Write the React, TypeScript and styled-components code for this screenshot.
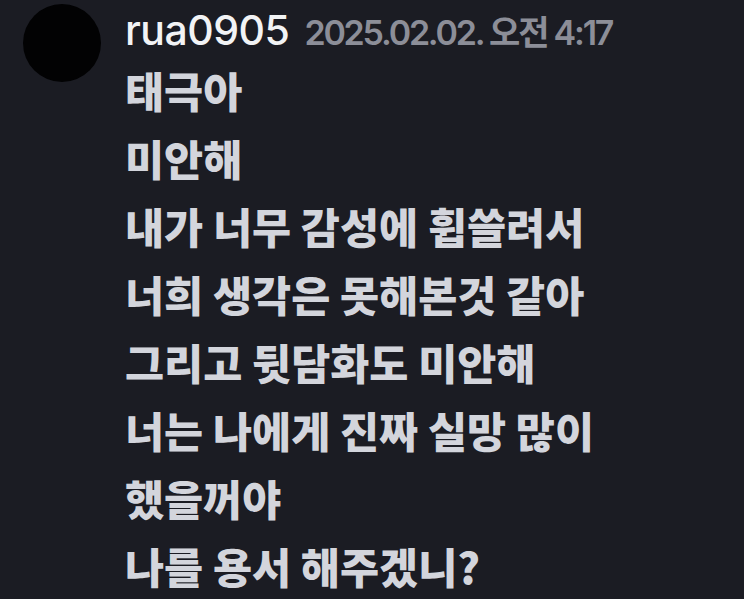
import React from "react";
import styled, { createGlobalStyle } from "styled-components";

const Global = createGlobalStyle`
  html, body { margin: 0; padding: 0; background: #1b1c23; }
  body { width: 744px; height: 599px; overflow: hidden; }
`;

const Page = styled.div`
  width: 744px;
  height: 599px;
  background: #1b1c23;
  box-sizing: border-box;
  padding: 4px 0 0 23px;
  overflow: hidden;
`;

const MessageRow = styled.div`
  display: flex;
  gap: 24px;
  align-items: flex-start;
`;

const Avatar = styled.div`
  width: 78px;
  height: 78px;
  border-radius: 50%;
  background: #020203;
  flex: none;
`;

const Content = styled.div`
  display: flex;
  flex-direction: column;
`;

const Header = styled.div`
  display: flex;
  align-items: baseline;
  gap: 15px;
  height: 52px;
  line-height: 52px;
`;

const Username = styled.span`
  font-family: Inter, "Noto Sans", "Noto Sans CJK KR", sans-serif;
  font-weight: 500;
  font-size: 41px;
  letter-spacing: -0.5px;
  color: #f2f3f5;
`;

const Timestamp = styled.span`
  font-family: Inter, "Noto Sans CJK KR", sans-serif;
  font-weight: 600;
  font-size: 34px;
  letter-spacing: -2.2px;
  color: #8c8e98;
`;

const Line = styled.div`
  font-family: "Noto Sans CJK KR", "Noto Sans", sans-serif;
  font-weight: 900;
  font-size: 42.5px;
  line-height: 68px;
  color: #d3d5dc;
  white-space: nowrap;
`;

const lines = [
  "태극아",
  "미안해",
  "내가 너무 감성에 휩쓸려서",
  "너희 생각은 못해본것 같아",
  "그리고 뒷담화도 미안해",
  "너는 나에게 진짜 실망 많이",
  "했을꺼야",
  "나를 용서 해주겠니?",
];

export default function App() {
  return (
    <>
      <Global />
      <Page>
        <MessageRow>
          <Avatar />
          <Content>
            <Header>
              <Username>rua0905</Username>
              <Timestamp>2025.02.02. 오전 4:17</Timestamp>
            </Header>
            {lines.map((l) => (
              <Line key={l}>{l}</Line>
            ))}
          </Content>
        </MessageRow>
      </Page>
    </>
  );
}
